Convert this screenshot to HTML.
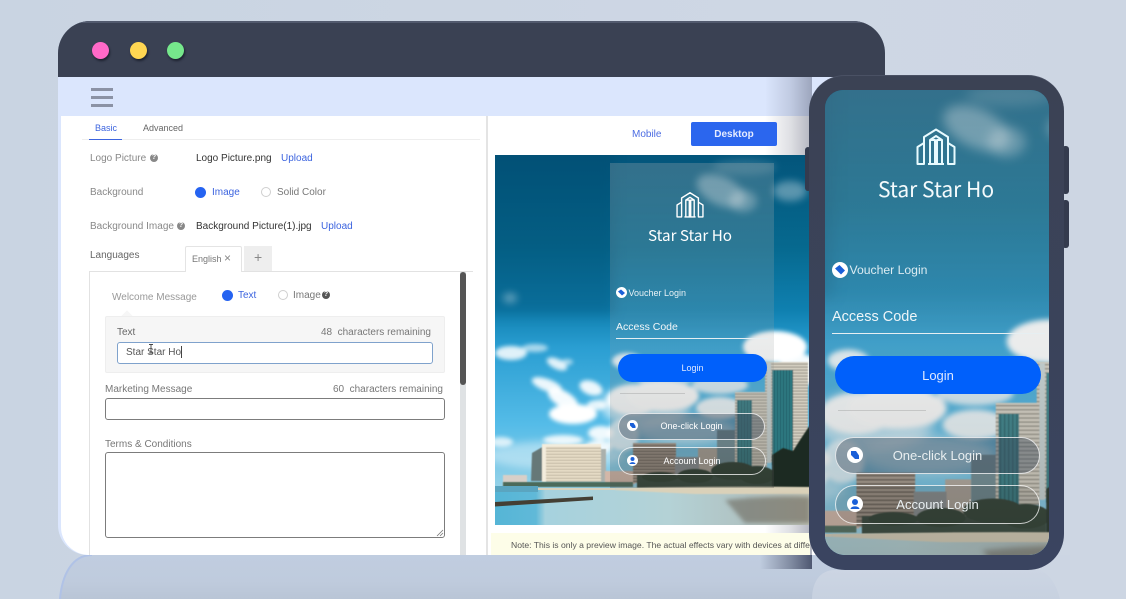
<!DOCTYPE html>
<html lang="en">
<head>
<meta charset="utf-8">
<title>Portal Editor</title>
<style>
html,body{margin:0;padding:0}
body{width:1126px;height:599px;overflow:hidden;position:relative;background:#cbd5e3;font-family:"Liberation Sans",sans-serif;font-size:10px;color:#666}
.a{position:absolute;white-space:nowrap}
.t{position:absolute;white-space:nowrap;line-height:12px;transform:translateY(-5px)}
.blue{color:#3c64df}
.radio{position:absolute;border-radius:50%;box-sizing:border-box}
.on{width:11px;height:11px;background:#2563f1}
.off{width:10px;height:10px;background:#fff;border:1px solid #cfcfcf}
.q{position:absolute;width:8px;height:8px;border-radius:50%;background:#888;color:#fff;font-size:7px;line-height:8px;text-align:center;font-weight:bold}
.field{position:absolute;box-sizing:border-box;background:#fff;border:1.3px solid #7c7c7c;border-radius:3px}
.pill{position:absolute;box-sizing:border-box;border:1px solid rgba(255,255,255,.75);border-radius:20px;color:#fff;text-align:center}
.ico{position:absolute;border-radius:50%;background:#fff}
.soft{filter:blur(.35px)}
</style>
</head>
<body>
<svg class="a" style="left:0;top:0" width="1126" height="599" viewBox="0 0 1126 599">
<defs>
<linearGradient id="r1" x1="0" y1="0" x2="0" y2="1"><stop offset="0" stop-color="#c0cde0"/><stop offset=".6" stop-color="#bfcbdd"/><stop offset="1" stop-color="#b9c5d6"/></linearGradient>
<linearGradient id="r2" x1="0" y1="0" x2="0" y2="1"><stop offset="0" stop-color="#ccd5e3"/><stop offset="1" stop-color="#c7d1e0"/></linearGradient>
<linearGradient id="bgt" x1="0" y1="0" x2="1" y2="0"><stop offset="0" stop-color="#c9d4e2"/><stop offset=".7" stop-color="#ced7e4"/><stop offset="1" stop-color="#cdd6e3"/></linearGradient>
</defs>
<rect width="1126" height="599" fill="url(#bgt)"/>
<path d="M60 599C62 575 72 555 92 555H900V599Z" fill="url(#r1)"/>
<path d="M60 599C62 575 72 555 92 555" fill="none" stroke="#b0c2e6" stroke-width="2"/>
<path d="M812 599C812 585 818 570 835 570H1040C1052 575 1058 590 1060 599Z" fill="url(#r2)"/>
<rect x="1040" y="555" width="30" height="15" fill="#ccd5e3"/>
<rect x="880" y="570" width="0" height="0" fill="none"/>
</svg>

<!-- browser window -->
<div class="a" style="left:58px;top:21px;width:827px;height:534px;border-radius:32px 32px 30px 30px;background:#dbe6fd;overflow:hidden">
  <div class="a" style="left:0;top:0;width:827px;height:56px;background:#3a4153;border-top:2px solid #525a6e;box-sizing:border-box"></div>
  <div class="a" style="left:3px;top:95px;width:824px;height:439px;background:#fff;border-bottom-left-radius:28px"></div>
</div>
<div class="a" style="left:92px;top:42px;width:17px;height:17px;border-radius:50%;background:#ff69c8;box-shadow:1px 2px 2px #1d2230"></div>
<div class="a" style="left:130px;top:42px;width:17px;height:17px;border-radius:50%;background:#ffd652;box-shadow:1px 2px 2px #1d2230"></div>
<div class="a" style="left:167px;top:42px;width:17px;height:17px;border-radius:50%;background:#76e88c;box-shadow:1px 2px 2px #1d2230"></div>
<div class="a" style="left:91px;top:88px;width:22px;height:3px;background:#8b92a5"></div>
<div class="a" style="left:91px;top:96px;width:22px;height:3px;background:#8b92a5"></div>
<div class="a" style="left:91px;top:104px;width:22px;height:3px;background:#8b92a5"></div>

<!-- phone shadow on window -->
<div class="a" style="left:765px;top:77px;width:47px;height:478px;background:linear-gradient(90deg,rgba(70,76,100,0),rgba(70,76,100,.18) 55%,rgba(70,76,100,.42))"></div>
<div class="a" style="left:760px;top:555px;width:52px;height:14px;background:linear-gradient(90deg,rgba(50,58,85,0),rgba(50,58,85,.45) 60%,rgba(50,58,85,.8))"></div>

<!-- left form -->
<div class="soft">
<div class="a" style="left:82px;top:139px;width:398px;height:1px;background:#eeeeee"></div>
<div class="a" style="left:89px;top:138.5px;width:33px;height:1.5px;background:#3c64df"></div>
<div class="t blue" style="left:95px;top:127px;font-size:9px">Basic</div>
<div class="t" style="left:143px;top:127px;font-size:9px;color:#666">Advanced</div>

<div class="t" style="left:90px;top:158px;color:#888">Logo Picture</div><div class="q" style="left:150px;top:154px">?</div>
<div class="t" style="left:196px;top:158px;color:#333">Logo Picture.png</div>
<div class="t blue" style="left:281px;top:158px">Upload</div>

<div class="t" style="left:90px;top:192px;color:#888">Background</div>
<div class="radio on" style="left:195px;top:186.5px"></div>
<div class="t blue" style="left:212px;top:192px">Image</div>
<div class="radio off" style="left:261px;top:187px"></div>
<div class="t" style="left:277px;top:192px;color:#777">Solid Color</div>

<div class="t" style="left:90px;top:226px;color:#888">Background Image</div><div class="q" style="left:177px;top:222px">?</div>
<div class="t" style="left:196px;top:226px;color:#333">Background Picture(1).jpg</div>
<div class="t blue" style="left:321px;top:226px">Upload</div>

<div class="t" style="left:90px;top:255px;color:#666">Languages</div>
<div class="a" style="left:185px;top:246px;width:57px;height:26px;box-sizing:border-box;background:#fff;border:1px solid #e4e4e4;border-bottom:0;border-radius:2px 2px 0 0;z-index:2"></div>
<div class="t" style="left:192px;top:258px;font-size:9px;color:#777;z-index:3">English</div>
<div class="t" style="left:224px;top:257px;font-size:12px;color:#888;z-index:3">×</div>
<div class="a" style="left:244px;top:246px;width:28px;height:25px;background:#eeeeee"></div>
<div class="t" style="left:254px;top:256px;font-size:14px;color:#888">+</div>

<div class="a" style="left:89px;top:271px;width:384px;height:1px;background:#e2e2e2"></div>
<div class="a" style="left:89px;top:271px;width:1px;height:284px;background:#e2e2e2"></div>
<div class="a" style="left:460px;top:272px;width:6px;height:283px;background:#dfe2e4"></div>
<div class="a" style="left:460px;top:272px;width:6px;height:113px;background:#555;border-radius:3px"></div>
<div class="a" style="left:486px;top:116px;width:2px;height:439px;background:#e4e4e4"></div>

<div class="t" style="left:112px;top:297px;color:#999">Welcome Message</div>
<div class="radio on" style="left:222px;top:289.5px"></div>
<div class="t blue" style="left:238px;top:295px">Text</div>
<div class="radio off" style="left:278px;top:290px"></div>
<div class="t" style="left:293px;top:295px;color:#777">Image</div><div class="q" style="left:322px;top:291px;background:#555">?</div>

<div class="a" style="left:123px;top:312px;width:8px;height:8px;background:#f6f6f6;transform:rotate(45deg)"></div>
<div class="a" style="left:105px;top:316px;width:340px;height:57px;box-sizing:border-box;background:#f6f6f6;border:1px solid #eeeeee;border-radius:2px"></div>
<div class="t" style="left:117px;top:332px;color:#666">Text</div>
<div class="t" style="right:695px;top:332px;color:#777">48&nbsp; characters remaining</div>
<div class="field" style="left:117px;top:342px;width:316px;height:22px;border:1.3px solid #7fa2cc"></div>
<div class="t" style="left:126px;top:352px;color:#555">Star Star Ho</div>
<div class="a" style="left:181px;top:346px;width:1px;height:12px;background:#444"></div>
<svg class="a" style="left:148px;top:344px" width="6" height="10" viewBox="0 0 6 10"><path d="M1 .5H5M3 .5V9M1 9H5" stroke="#444" stroke-width=".9" fill="none"/></svg>

<div class="t" style="left:105px;top:389px;color:#777">Marketing Message</div>
<div class="t" style="right:683px;top:389px;color:#777">60&nbsp; characters remaining</div>
<div class="field" style="left:105px;top:398px;width:340px;height:22px"></div>

<div class="t" style="left:105px;top:444px;color:#777">Terms &amp; Conditions</div>
<div class="field" style="left:105px;top:452px;width:340px;height:86px"></div>
<svg class="a" style="left:436px;top:529px" width="8" height="8" viewBox="0 0 8 8"><path d="M1 7L7 1M4 7L7 4" stroke="#777" stroke-width=".8" fill="none"/></svg>

<div class="t" style="left:632px;top:134px;color:#4c6ce2;font-size:10px">Mobile</div>
<div class="a" style="left:691px;top:122px;width:86px;height:24px;border-radius:2px;background:#2b66ee;color:#e6ecff;text-align:center;line-height:25px;font-weight:bold;font-size:10px">Desktop</div>
</div>

<!-- shared scene -->
<svg width="0" height="0" style="position:absolute">
<defs>
<linearGradient id="sky" x1="0" y1="0" x2="0" y2="1">
<stop offset="0" stop-color="#03557b"/><stop offset=".25" stop-color="#06698f"/><stop offset=".42" stop-color="#0f80b0"/><stop offset=".52" stop-color="#2a9ed2"/><stop offset=".73" stop-color="#55bce8"/><stop offset=".9" stop-color="#96d2e8"/>
</linearGradient>
<linearGradient id="water" x1="0" y1="0" x2="1" y2="0">
<stop offset="0" stop-color="#55b5d6"/><stop offset=".13" stop-color="#60b9d8"/><stop offset=".16" stop-color="#a6d2de"/><stop offset=".55" stop-color="#b4d2d6"/><stop offset=".8" stop-color="#b0c2c2"/><stop offset="1" stop-color="#bcc0b4"/>
</linearGradient>
<filter id="b6" x="-50%" y="-50%" width="200%" height="200%"><feGaussianBlur stdDeviation="6"/></filter>
<filter id="b4" x="-30%" y="-30%" width="160%" height="160%"><feGaussianBlur stdDeviation="4"/></filter>
<filter id="b2" x="-30%" y="-30%" width="160%" height="160%"><feGaussianBlur stdDeviation="2"/></filter>
<filter id="b1" x="-10%" y="-10%" width="120%" height="120%"><feGaussianBlur stdDeviation=".4"/></filter>
<pattern id="win" width="3" height="3" patternUnits="userSpaceOnUse"><rect width="3" height="3" fill="#ece2cc"/><rect y="1.8" width="3" height="1" fill="#b5ab97"/></pattern>
<pattern id="win2" width="3" height="3" patternUnits="userSpaceOnUse"><rect width="3" height="3" fill="#a89a8c"/><rect y="1.8" width="3" height="1.1" fill="#5c5248"/></pattern>
<pattern id="cream" width="4" height="3" patternUnits="userSpaceOnUse"><rect width="4" height="3" fill="#d8d2c4"/><rect y="1.6" width="4" height="1" fill="#8f8b80"/></pattern>
<pattern id="teal" width="3" height="3" patternUnits="userSpaceOnUse"><rect width="3" height="3" fill="#2f7c84"/><rect width="1" height="3" fill="#1d5a62"/></pattern>
<g id="scene">
<rect width="315" height="370" fill="url(#sky)"/>
<rect x="-10" y="-10" width="130" height="170" fill="#02466c" opacity=".3" filter="url(#b6)"/>
<g fill="#fff" filter="url(#b4)">
<ellipse cx="226" cy="36" rx="26" ry="14" opacity=".36" transform="rotate(25 226 36)"/>
<ellipse cx="248" cy="46" rx="14" ry="11" opacity=".3"/>
<ellipse cx="295" cy="36" rx="17" ry="10" opacity=".35"/>
<ellipse cx="250" cy="12" rx="32" ry="8" opacity=".14"/>
<ellipse cx="15" cy="143" rx="7" ry="5" opacity=".35"/>
<ellipse cx="60" cy="300" rx="70" ry="14" opacity=".4"/>
<ellipse cx="190" cy="275" rx="50" ry="14" opacity=".5"/>
<ellipse cx="150" cy="250" rx="45" ry="22" opacity=".6"/>
</g>
<g fill="#fff" filter="url(#b2)">
<ellipse cx="16" cy="198" rx="16" ry="7" opacity=".85"/><ellipse cx="40" cy="193" rx="13" ry="4" opacity=".6"/>
<ellipse cx="62" cy="209" rx="11" ry="5" opacity=".85" transform="rotate(25 62 209)"/><ellipse cx="72" cy="207" rx="6" ry="3" opacity=".6"/>
<ellipse cx="52" cy="230" rx="16" ry="6" opacity=".9" transform="rotate(20 52 230)"/>
<ellipse cx="68" cy="244" rx="17" ry="8" opacity=".95" transform="rotate(30 68 244)"/>
<ellipse cx="78" cy="259" rx="24" ry="10" opacity="1"/>
<ellipse cx="102" cy="250" rx="10" ry="5" opacity=".85"/>
<ellipse cx="96" cy="233" rx="12" ry="7" opacity=".9" transform="rotate(20 96 233)"/>
<ellipse cx="68" cy="285" rx="20" ry="5" opacity=".85"/>
<ellipse cx="106" cy="278" rx="13" ry="7" opacity=".9"/><ellipse cx="104" cy="292" rx="13" ry="7" opacity=".85"/>
<ellipse cx="6" cy="287" rx="12" ry="5" opacity=".75"/>
<ellipse cx="132" cy="206" rx="15" ry="8" opacity=".9"/>
<ellipse cx="138" cy="245" rx="26" ry="15" opacity=".95"/><ellipse cx="168" cy="241" rx="36" ry="15" opacity="1"/><ellipse cx="170" cy="224" rx="28" ry="8" opacity=".6"/>
<ellipse cx="128" cy="280" rx="16" ry="16" opacity=".75"/>
<ellipse cx="280" cy="192" rx="32" ry="16" opacity="1"/><ellipse cx="305" cy="215" rx="22" ry="16" opacity=".95"/>
<ellipse cx="225" cy="230" rx="28" ry="9" opacity=".8"/><ellipse cx="225" cy="253" rx="24" ry="11" opacity=".9"/>
</g>
<g filter="url(#b1)">
<rect x="8" y="320" width="24" height="10" fill="#d8cfc8"/>
<path d="M37 298L49 291V326H36Z" fill="#667878"/>
<rect x="47" y="289" width="59" height="38" fill="url(#win)"/><rect x="47" y="289" width="4" height="38" fill="#f3ecdc"/><rect x="47" y="289" width="59" height="2.5" fill="#f3ecdc"/>
<rect x="106" y="294" width="5" height="33" fill="#aab0ac"/>
<rect x="110" y="316" width="30" height="13" fill="#d3b7a8"/>
<rect x="138" y="288" width="43" height="40" fill="url(#win2)"/>
<rect x="203" y="293" width="19" height="30" fill="#b0a69a"/>
<rect x="180" y="302" width="24" height="24" fill="#8a8f92"/>
<rect x="222" y="275" width="21" height="48" fill="#6b8890"/>
<rect x="240" y="237" width="32" height="75" fill="url(#cream)"/>
<rect x="242" y="245" width="15" height="70" fill="url(#teal)"/>
<rect x="270" y="207" width="43" height="100" fill="url(#cream)"/>
<rect x="272" y="208" width="4" height="100" fill="#c8d4d4"/>
<rect x="277" y="215" width="21" height="95" fill="url(#teal)"/>
</g>
<g filter="url(#b1)" fill="#26382a">
<rect x="142" y="320" width="135" height="13" fill="#2e4034"/>
<ellipse cx="165" cy="322" rx="18" ry="5"/><ellipse cx="200" cy="321" rx="18" ry="7"/><ellipse cx="238" cy="316" rx="22" ry="9"/><ellipse cx="262" cy="320" rx="18" ry="9"/>
<path d="M277 335V300L288 293 298 296 305 285 315 270V335Z" fill="#1e2c20"/>
</g>
<rect x="8" y="327" width="130" height="5" fill="#4c6a5a" filter="url(#b1)"/>
<rect y="333" width="315" height="37" fill="url(#water)"/>
<rect y="331" width="43" height="6" fill="#5aa5c0"/>
<path d="M43 333H120V335H43Z" fill="#d8d2bd"/>
<path d="M120 333Q220 331 315 332V339H200Q160 337 120 335Z" fill="#dad1b9" filter="url(#b1)"/>
<path d="M0 347L98 341.5V345L0 351.5Z" fill="#443f34"/>
<path d="M230 345Q280 340 315 342V368H250Z" fill="#5e5648" opacity=".5" filter="url(#b2)"/>
</g>
<linearGradient id="pane" x1="0" y1="0" x2="0" y2="1"><stop offset="0" stop-color="#b0b4b2" stop-opacity=".28"/><stop offset=".55" stop-color="#9aa0a0" stop-opacity=".2"/><stop offset="1" stop-color="#4a4a46" stop-opacity=".28"/></linearGradient>
</defs>
</svg>

<!-- preview -->
<svg class="a" style="left:495px;top:155px" width="315" height="370" viewBox="0 0 315 370">
<use href="#scene"/>
<rect x="115" y="8" width="164" height="325" fill="url(#pane)"/>
</svg>
<div class="a" style="left:491px;top:533px;width:319px;height:22px;background:#fdfde8;overflow:hidden">
<div class="t" style="left:20px;top:11px;font-size:8.6px;color:#555">Note: This is only a preview image. The actual effects vary with devices at different resolutions.</div>
</div>

<svg class="a" style="left:675px;top:191px" width="30" height="28" viewBox="15 12 42 40" fill="none" stroke="#fff" stroke-width="2" stroke-linejoin="round"><path d="M17.5 49V32L24 28V49ZM54.5 49V32L48 28V49ZM24 28V22L36 14.5L48 22V28M30 49V25H35V49ZM37 49V25H42V49ZM28 49H44M30 25L36 21L42 25"/></svg>
<div class="t" style="left:610px;width:160px;text-align:center;top:235px;font-family:'Noto Sans CJK SC',sans-serif;font-size:15.2px;line-height:16px;transform:translateY(-8px);color:#fff">Star Star Ho</div>

<div class="ico" style="left:615.5px;top:287px;width:11px;height:11px"></div>
<svg class="a" style="left:615.5px;top:287px" width="11" height="11" viewBox="0 0 11 11"><path d="M2 4.5L5 2.5L9 6L6 8.5Z" fill="#1a5fd8"/></svg>
<div class="t" style="left:628.5px;top:292px;font-size:9px;color:#e8f2f6">Voucher Login</div>
<div class="t" style="left:616px;top:326px;font-size:10.5px;color:#f2f6f8">Access Code</div>
<div class="a" style="left:616px;top:338px;width:152px;height:1px;background:#e6eff2"></div>
<div class="a" style="left:618px;top:354px;width:149px;height:28px;border-radius:14px;background:#0060fb;color:#dfe9ff;text-align:center;line-height:29px;font-size:9px">Login</div>
<div class="a" style="left:620px;top:393px;width:65px;height:1px;background:rgba(130,130,130,.3)"></div>
<div class="pill" style="left:618px;top:413px;width:147px;height:27px;line-height:25px;font-size:9px;background:rgba(60,75,90,.42)">One-click Login</div>
<div class="pill" style="left:618px;top:447px;width:148px;height:28px;line-height:26px;font-size:9px;background:rgba(40,40,40,.12)">Account Login</div>
<div class="ico" style="left:627px;top:420px;width:11px;height:11px"></div>
<svg class="a" style="left:627px;top:420px" width="11" height="11" viewBox="0 0 11 11"><path d="M3 3H6.5L8.5 6V8H5.5L3 5.5Z" fill="#1a5fd8"/></svg>
<div class="ico" style="left:627px;top:455px;width:11px;height:11px"></div>
<svg class="a" style="left:627px;top:455px" width="11" height="11" viewBox="0 0 11 11"><circle cx="5.5" cy="4" r="2" fill="#1a5fd8"/><path d="M2.5 9C3 6.5 8 6.5 8.5 9Z" fill="#1a5fd8"/></svg>

<!-- phone -->
<div class="a" style="left:805px;top:147px;width:6px;height:44px;background:#343b4e;border-radius:3px"></div>
<div class="a" style="left:1062px;top:146px;width:7px;height:48px;background:#343b4e;border-radius:3px"></div>
<div class="a" style="left:1062px;top:200px;width:7px;height:48px;background:#343b4e;border-radius:3px"></div>
<div class="a" style="left:809px;top:75px;width:255px;height:495px;box-sizing:border-box;border-radius:36px;background:linear-gradient(180deg,#3b4254,#3a4460);border-top:1px solid #4a5164"></div>
<div class="a" style="left:825px;top:90px;width:224px;height:465px;border-radius:18px 18px 20px 20px;overflow:hidden;background:#1a6c90">
<svg width="224" height="465" viewBox="115 8 164 340.4" preserveAspectRatio="none" style="display:block">
<use href="#scene"/>
<rect x="115" y="8" width="164" height="341" fill="url(#pane)"/>
</svg>
</div>
<svg class="a" style="left:915px;top:127px" width="42" height="40" viewBox="15 12 42 40" fill="none" stroke="#e8fbff" stroke-width="2" stroke-linejoin="round"><path d="M17.5 49V32L24 28V49ZM54.5 49V32L48 28V49ZM24 28V22L36 14.5L48 22V28M30 49V25H35V49ZM37 49V25H42V49ZM28 49H44M30 25L36 21L42 25"/></svg>
<div class="t" style="left:826px;width:220px;text-align:center;top:189px;font-family:'Noto Sans CJK SC',sans-serif;font-size:21px;line-height:24px;transform:translateY(-12px);color:#f4fafc">Star Star Ho</div>

<div class="ico" style="left:831.5px;top:262px;width:16px;height:16px"></div>
<svg class="a" style="left:831.5px;top:262px" width="16" height="16" viewBox="0 0 16 16"><path d="M3 6.5L7.5 3L13 8.5L9 12.5Z" fill="#1a5fd8"/></svg>
<div class="t" style="left:849.5px;top:269px;font-size:12.2px;color:#dcecf2">Voucher Login</div>
<div class="t" style="left:832px;top:317px;font-size:14.5px;line-height:16px;transform:translateY(-8px);color:#eef5f8">Access Code</div>
<div class="a" style="left:832px;top:333px;width:213px;height:1px;background:#e6eff2"></div>
<div class="a" style="left:835px;top:356px;width:206px;height:38px;border-radius:19px;background:#0060fb;color:#dfe9ff;text-align:center;line-height:39px;font-size:13px">Login</div>
<div class="a" style="left:838px;top:410px;width:88px;height:1px;background:rgba(130,130,130,.3)"></div>
<div class="pill" style="left:835px;top:437px;width:205px;height:37px;line-height:36px;font-size:13px;background:rgba(60,75,90,.42);border-radius:19px;color:#e8eef0">One-click Login</div>
<div class="pill" style="left:835px;top:485px;width:205px;height:39px;line-height:37px;font-size:13px;background:rgba(40,40,40,.12);border-radius:20px;color:#e8eef0">Account Login</div>
<div class="ico" style="left:847px;top:447px;width:16px;height:16px"></div>
<svg class="a" style="left:847px;top:447px" width="16" height="16" viewBox="0 0 16 16"><path d="M4 4H9L12 8.5V12H8L4 8Z" fill="#1a5fd8"/></svg>
<div class="ico" style="left:847px;top:496px;width:16px;height:16px"></div>
<svg class="a" style="left:847px;top:496px" width="16" height="16" viewBox="0 0 16 16"><circle cx="8" cy="6" r="3" fill="#1a5fd8"/><path d="M3.5 13C4 9.5 12 9.5 12.5 13Z" fill="#1a5fd8"/></svg>
</body>
</html>
